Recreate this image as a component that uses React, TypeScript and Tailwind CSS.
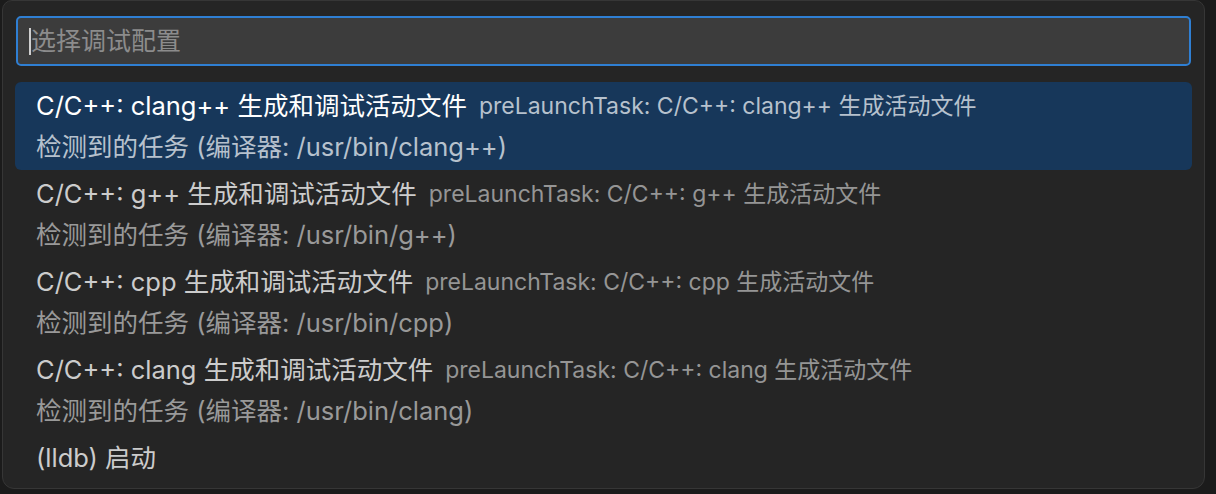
import React from "react";

type Item = { label: string; desc?: string; detail?: string; selected?: boolean };

const items: Item[] = [
  {
    label: "C/C++: clang++ 生成和调试活动文件",
    desc: "preLaunchTask: C/C++: clang++ 生成活动文件",
    detail: "检测到的任务 (编译器: /usr/bin/clang++)",
    selected: true,
  },
  {
    label: "C/C++: g++ 生成和调试活动文件",
    desc: "preLaunchTask: C/C++: g++ 生成活动文件",
    detail: "检测到的任务 (编译器: /usr/bin/g++)",
  },
  {
    label: "C/C++: cpp 生成和调试活动文件",
    desc: "preLaunchTask: C/C++: cpp 生成活动文件",
    detail: "检测到的任务 (编译器: /usr/bin/cpp)",
  },
  {
    label: "C/C++: clang 生成和调试活动文件",
    desc: "preLaunchTask: C/C++: clang 生成活动文件",
    detail: "检测到的任务 (编译器: /usr/bin/clang)",
  },
  { label: "(lldb) 启动" },
];

const font = {
  fontFamily: '"Inter", "Noto Sans CJK SC", sans-serif',
};

export default function App() {
  return (
    <div className="w-[1216px] h-[494px] bg-[#1b1b1b] overflow-hidden" style={font}>
      <div className="ml-[2px] w-[1203px] h-[489px] bg-[#252525] border border-[#363636] rounded-b-[12px] rounded-t-[10px] pt-[15px] px-[12px]">
        <div className="mx-[1px] h-[50px] border-2 border-[#2f7fd3] rounded-[5px] bg-[#3c3c3c] flex items-center pl-[11px]">
          <span className="w-[2px] h-[27px] bg-[#cfcfcf]" />
          <span className="text-[25px] text-[#8c8c8c] leading-none">选择调试配置</span>
        </div>
        <div className="mt-[16px] flex flex-col">
          {items.map((it, i) => (
            <div
              key={i}
              className={
                "rounded-[6px] pl-[21px] pr-4 " + (it.selected ? "bg-[#17375a]" : "")
              }
            >
              <div className="h-[44px] pt-[4px] flex items-center whitespace-nowrap">
                <span
                  className={
                    "text-[25.5px] " + (it.selected ? "text-white" : "text-[#cccccc]")
                  }
                >
                  {it.label}
                </span>
                {it.desc && (
                  <span
                    className={
                      "ml-[12px] text-[23px] " +
                      (it.selected ? "text-[#b6c1cd]" : "text-[#959595]")
                    }
                  >
                    {it.desc}
                  </span>
                )}
              </div>
              {it.detail && (
                <div
                  className={
                    "h-[44px] flex items-start pt-[2px] whitespace-nowrap text-[25.5px] " +
                    (it.selected ? "text-[#b6c1cd]" : "text-[#999999]")
                  }
                >
                  {it.detail}
                </div>
              )}
            </div>
          ))}
        </div>
      </div>
    </div>
  );
}
